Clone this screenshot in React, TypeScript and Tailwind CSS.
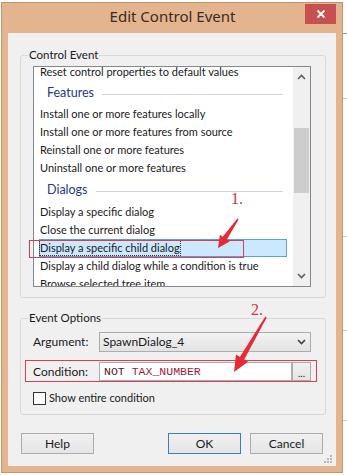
import React from "react";

const Row = ({ children }: { children: React.ReactNode }) => (
  <div className="h-[18px] pl-[6px] flex items-center whitespace-nowrap text-[11px] text-[#1a1a1a]">{children}</div>
);

const Header = ({ label, h }: { label: string; h: string }) => (
  <div className={`${h} pl-[13px] pr-[10px] flex items-center gap-[8px]`}>
    <span className="text-[12.5px] leading-none text-[#1e3a8a]">{label}</span>
    <div className="flex-1 h-px bg-[#cfd6e2] mt-[2px]" />
  </div>
);

export default function App() {
  return (
    <div className="relative w-[347px] h-[475px] bg-white overflow-hidden font-['Lato',sans-serif] text-[12px] text-[#1a1a1a]">
      {/* background behind the window */}
      <div className="absolute right-0 top-[33px] w-[4px] h-px bg-[#9a9a9a]" />
      <div className="absolute right-0 top-[98px] w-[4px] h-px bg-[#c8c8c8]" />
      <div className="absolute right-0 top-[236px] w-[4px] h-px bg-[#c8c8c8]" />
      <div className="absolute right-0 top-[330px] w-[4px] h-px bg-[#c8c8c8]" />
      <div className="absolute right-0 top-[420px] w-[4px] h-px bg-[#c8c8c8]" />

      {/* window */}
      <div className="ml-[1px] mt-[2px] w-[342px] h-[471px] bg-[#e4b48e] border border-[#c0966f] flex flex-col">
        {/* title bar */}
        <div className="h-[30px] flex items-start">
          <div className="w-[38px]" />
          <div className="flex-1 h-[27px] flex items-center justify-center text-[15px] text-[#3a2c22] font-['Noto_Sans',sans-serif]">
            Edit Control Event
          </div>
          <div className="w-[31px] h-[20px] mt-[1px] mr-[6px] bg-[#c75050] flex items-center justify-center">
            <svg width="10" height="10" viewBox="0 0 10 10">
              <path d="M1.5 1.5 L8.5 8.5 M8.5 1.5 L1.5 8.5" stroke="white" strokeWidth="1.8" />
            </svg>
          </div>
        </div>

        {/* client area */}
        <div className="relative mx-[6px] mb-[6px] flex-1 bg-[#f0f0f0] flex flex-col">
          {/* Control Event group */}
          <fieldset className="mt-[14px] ml-[12px] mr-[10px] border border-[#d8d8d8] rounded-[3px] pb-[10px]">
            <legend className="ml-[7px] px-[1px] text-[11.5px] leading-[16px]">Control Event</legend>
            <div className="ml-[12px] mr-[14px] mt-[3px] h-[221px] border border-[#828790] bg-white flex overflow-hidden">
              <div className="flex-1 overflow-hidden">
                <div className="-mt-[4px]">
                  <Row>Reset control properties to default values</Row>
                  <Header label="Features" h="h-[24px]" />
                  <Row>Install one or more features locally</Row>
                  <Row>Install one or more features from source</Row>
                  <Row>Reinstall one or more features</Row>
                  <Row>Uninstall one or more features</Row>
                  <Header label="Dialogs" h="h-[26px]" />
                  <Row>Display a specific dialog</Row>
                  <Row>Close the current dialog</Row>
                  <div className="h-[18px] ml-[5px] w-[248px] bg-[#cce8ff] border border-[#5b9fd6] flex items-center whitespace-nowrap text-[11px]">
                    <span className="outline-1 outline-dotted outline-[#333] leading-[14px]">Display a specific child dialog</span>
                  </div>
                  <Row>Display a child dialog while a condition is true</Row>
                  <Row>Browse selected tree item</Row>
                </div>
              </div>
              {/* scrollbar */}
              <div className="w-[17px] bg-[#f0f0f0] flex flex-col">
                <div className="h-[20px] flex items-center justify-center">
                  <svg width="9" height="6" viewBox="0 0 9 6">
                    <path d="M1 5 L4.5 1.5 L8 5" stroke="#606060" strokeWidth="1.6" fill="none" />
                  </svg>
                </div>
                <div className="h-[41px]" />
                <div className="h-[65px] mx-[1px] bg-[#cdcdcd]" />
                <div className="flex-1" />
                <div className="h-[20px] flex items-center justify-center">
                  <svg width="9" height="6" viewBox="0 0 9 6">
                    <path d="M1 1 L4.5 4.5 L8 1" stroke="#606060" strokeWidth="1.6" fill="none" />
                  </svg>
                </div>
              </div>
            </div>
          </fieldset>

          {/* Event Options group */}
          <fieldset className="mt-[12px] ml-[12px] mr-[10px] border border-[#d8d8d8] rounded-[3px] pb-[9px]">
            <legend className="ml-[7px] px-[1px] text-[11.5px] leading-[16px]">Event Options</legend>
            <div className="mt-[6px] h-[20px] flex items-center pl-[12px] mr-[14px]">
              <div className="w-[66px]">Argument:</div>
              <div className="flex-1 h-full border border-[#acacac] bg-gradient-to-b from-[#f2f2f2] to-[#e3e3e3] flex items-center pl-[3px] pr-[4px]">
                <span className="flex-1">SpawnDialog_4</span>
                <svg width="9" height="6" viewBox="0 0 9 6">
                  <path d="M1 1 L4.5 4.5 L8 1" stroke="#404040" strokeWidth="1.6" fill="none" />
                </svg>
              </div>
            </div>
            <div className="mt-[10px] h-[19px] flex items-center pl-[12px] mr-[14px]">
              <div className="w-[66px]">Condition:</div>
              <div className="flex-1 h-full border border-[#abadb3] bg-white flex items-center pl-[4px] font-['Liberation_Mono',monospace] text-[11.5px]">
                <span className="text-[#5a1420]">NOT</span>
                <span className="ml-[7px] text-[#9c1c35]">TAX_NUMBER</span>
              </div>
              <div className="w-[19px] h-full border border-[#acacac] bg-gradient-to-b from-[#f2f2f2] to-[#e3e3e3] flex items-end justify-center text-[10px] leading-[12px] pb-[1px]">
                ...
              </div>
            </div>
            <div className="mt-[11px] h-[13px] flex items-center pl-[12px]">
              <div className="w-[13px] h-[13px] border border-[#333] bg-white" />
              <span className="ml-[3px] text-[11px]">Show entire condition</span>
            </div>
          </fieldset>

          {/* buttons */}
          <div className="mt-[18px] h-[21px] flex ml-[13px] mr-[13px]">
            <div className="w-[73px] h-full border border-[#acacac] bg-gradient-to-b from-[#f0f0f0] to-[#e5e5e5] flex items-center justify-center">Help</div>
            <div className="flex-1" />
            <div className="w-[73px] h-full border border-[#3c7fb1] bg-gradient-to-b from-[#f0f0f0] to-[#e5e5e5] flex items-center justify-center">OK</div>
            <div className="w-[73px] h-full ml-[9px] border border-[#acacac] bg-gradient-to-b from-[#f0f0f0] to-[#e5e5e5] flex items-center justify-center">Cancel</div>
          </div>

          {/* size grip */}
          <svg className="absolute right-[4px] bottom-[3px]" width="9" height="9" viewBox="0 0 9 9">
            <rect x="7" y="1" width="2" height="2" fill="#b8b8b8" />
            <rect x="4" y="4" width="2" height="2" fill="#b8b8b8" />
            <rect x="7" y="4" width="2" height="2" fill="#b8b8b8" />
            <rect x="1" y="7" width="2" height="2" fill="#b8b8b8" />
            <rect x="4" y="7" width="2" height="2" fill="#b8b8b8" />
            <rect x="7" y="7" width="2" height="2" fill="#b8b8b8" />
          </svg>
        </div>
      </div>

      {/* annotations */}
      <div className="absolute left-[29px] top-[240px] w-[215px] h-[18px] border border-[#d9404f]" />
      <div className="absolute left-[25px] top-[360px] w-[292px] h-[22px] border border-[#d9404f]" />
      <div className="absolute left-[231px] top-[190px] text-[16px] leading-[18px] text-[#d43445] font-['Liberation_Serif',serif]">1.</div>
      <div className="absolute left-[251px] top-[301px] text-[16px] leading-[18px] text-[#d43445] font-['Liberation_Serif',serif]">2.</div>
      <svg className="absolute left-0 top-0 pointer-events-none" width="347" height="475">
        <polygon
          points="238.6,219.4 226.9,239.5 229.7,241.5 218,248 219.9,234.7 222.7,236.7 237.4,218.6"
          fill="#e62a36"
        />
        <polygon
          points="266.7,317.4 244.2,359.4 248.1,361.7 234,372 236.0,354.6 239.9,356.9 265.3,316.6"
          fill="#e62a36"
        />
      </svg>
    </div>
  );
}
